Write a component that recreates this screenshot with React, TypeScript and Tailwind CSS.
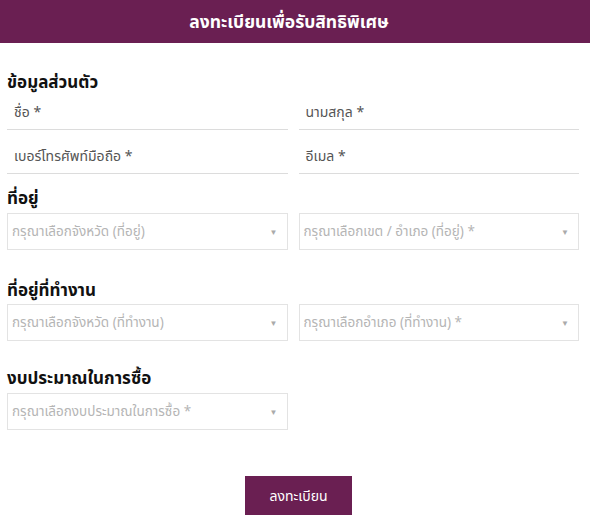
const font = { fontFamily: '"Noto Sans", "Noto Sans Thai", sans-serif' };

function Line({ label }: { label: string }) {
  return (
    <div className="h-9 flex items-center px-[7px] border-b border-[#dcdcdc] text-[14px] text-[#555]">
      {label}
    </div>
  );
}

function Select({ label }: { label: string }) {
  return (
    <div className="h-[37px] flex items-center justify-between pl-[4px] pr-[9px] border border-[#e3e3e3] text-[13.5px] text-[#b5b5b5]">
      <span>{label}</span>
      <span className="text-[8px] text-[#aaa]">▼</span>
    </div>
  );
}

function Heading({ children }: { children: string }) {
  return <h3 className="text-[17px] font-bold leading-6 text-[#111]">{children}</h3>;
}

export default function App() {
  return (
    <div className="w-[590px] h-[520px] bg-white" style={font}>
      <div className="h-[43px] bg-[#6a1f52] flex items-center justify-center">
        <h1 className="text-white text-[17.5px] font-bold pr-[12px]">ลงทะเบียนเพื่อรับสิทธิพิเศษ</h1>
      </div>
      <div className="pl-[7px] pr-[11px] pt-[27px]">
        <Heading>ข้อมูลส่วนตัว</Heading>
        <div className="grid grid-cols-2 gap-x-[11px] gap-y-2">
          <Line label="ชื่อ *" />
          <Line label="นามสกุล *" />
          <Line label="เบอร์โทรศัพท์มือถือ *" />
          <Line label="อีเมล *" />
        </div>

        <div className="mt-3">
          <Heading>ที่อยู่</Heading>
          <div className="grid grid-cols-2 gap-x-[11px] mt-[3px]">
            <Select label="กรุณาเลือกจังหวัด (ที่อยู่)" />
            <Select label="กรุณาเลือกเขต / อำเภอ (ที่อยู่) *" />
          </div>
        </div>

        <div className="mt-7">
          <Heading>ที่อยู่ที่ทำงาน</Heading>
          <div className="grid grid-cols-2 gap-x-[11px] mt-[2px]">
            <Select label="กรุณาเลือกจังหวัด (ที่ทำงาน)" />
            <Select label="กรุณาเลือกอำเภอ (ที่ทำงาน) *" />
          </div>
        </div>

        <div className="mt-[25px]">
          <Heading>งบประมาณในการซื้อ</Heading>
          <div className="grid grid-cols-2 gap-x-[11px] mt-[3px]">
            <Select label="กรุณาเลือกงบประมาณในการซื้อ *" />
          </div>
        </div>

        <div className="flex justify-center mt-[46px] pl-[11px]">
          <button className="w-[107px] h-[39px] bg-[#6a1f52] text-white text-[14px]">ลงทะเบียน</button>
        </div>
      </div>
    </div>
  );
}
